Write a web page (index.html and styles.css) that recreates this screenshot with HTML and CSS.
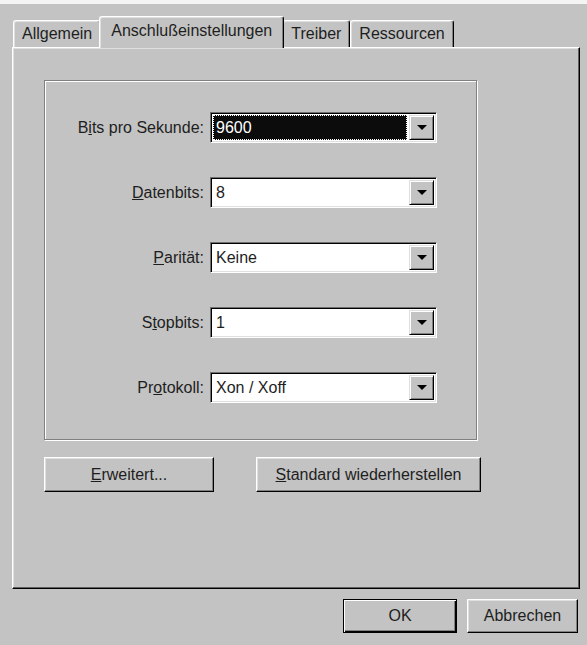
FILE: index.html
```html
<!DOCTYPE html>
<html lang="de">
<head>
<meta charset="utf-8">
<title>Eigenschaften von COM1</title>
<link rel="stylesheet" href="styles.css">
</head>
<body>
<div class="dialog">
  <div class="tabs">
    <div class="tab">Allgemein</div>
    <div class="tab tab-active">Anschlußeinstellungen</div>
    <div class="tab">Treiber</div>
    <div class="tab">Ressourcen</div>
  </div>

  <div class="panel">
    <div class="group">
      <div class="row">
        <label class="lbl">B<u>i</u>ts pro Sekunde:</label>
        <div class="combo">
          <span class="value value-selected">9600</span>
          <span class="arrow"><span class="tri"></span></span>
        </div>
      </div>
      <div class="row">
        <label class="lbl"><u>D</u>atenbits:</label>
        <div class="combo">
          <span class="value">8</span>
          <span class="arrow"><span class="tri"></span></span>
        </div>
      </div>
      <div class="row">
        <label class="lbl"><u>P</u>arität:</label>
        <div class="combo">
          <span class="value">Keine</span>
          <span class="arrow"><span class="tri"></span></span>
        </div>
      </div>
      <div class="row">
        <label class="lbl">S<u>t</u>opbits:</label>
        <div class="combo">
          <span class="value">1</span>
          <span class="arrow"><span class="tri"></span></span>
        </div>
      </div>
      <div class="row">
        <label class="lbl">Pr<u>o</u>tokoll:</label>
        <div class="combo">
          <span class="value">Xon / Xoff</span>
          <span class="arrow"><span class="tri"></span></span>
        </div>
      </div>
    </div>

    <div class="actions">
      <button class="btn btn-advanced"><u>E</u>rweitert...</button>
      <button class="btn btn-restore"><u>S</u>tandard wiederherstellen</button>
    </div>
  </div>

  <div class="footer">
    <button class="btn btn-ok btn-default">OK</button>
    <button class="btn btn-cancel">Abbrechen</button>
  </div>
</div>
</body>
</html>
```

FILE: styles.css
```css
* {
  box-sizing: border-box;
}

html,
body {
  margin: 0;
  height: 100%;
}

body {
  background: #c3c3c3;
  font-family: "Liberation Sans", Arial, sans-serif;
  font-size: 16px;
  color: #1e1e1e;
  border-top: 4px solid #f4f4f4;
}

.dialog {
  padding: 12px 7px 0 12px;
}

/* ---- tab strip ---- */
.tabs {
  display: flex;
  align-items: flex-end;
  padding-left: 1px;
}

.tab {
  height: 27px;
  padding: 0 8px;
  display: flex;
  align-items: center;
  border: 1px solid;
  border-color: #fff #000 transparent #fff;
  border-bottom: 0;
  border-radius: 3px 3px 0 0;
  box-shadow: inset -1px 0 #808080, inset 1px 1px #dfdfdf;
  background: #c3c3c3;
  white-space: nowrap;
}

.tab-active {
  position: relative;
  z-index: 1;
  height: 32px;
  margin: 0 -2px -1px;
  padding: 0 11px 4px;
}

/* ---- page area ---- */
.panel {
  width: 568px;
  height: 542px;
  padding: 32px 0 0 31px;
  border: 1px solid;
  border-color: #fff #000 #000 #fff;
  box-shadow: inset -1px -1px #606060, inset 1px 1px #dfdfdf;
}

.group {
  width: 433px;
  height: 360px;
  padding: 31px 0 0 0;
  border: 1px solid #808080;
  box-shadow: 1px 1px 0 #fff, inset 1px 1px 0 #fff;
  display: flex;
  flex-direction: column;
  gap: 34px;
}

.row {
  display: flex;
  align-items: center;
  height: 31px;
}

.lbl {
  flex: 0 0 165px;
  padding-right: 6px;
  text-align: right;
  white-space: nowrap;
}

/* ---- drop-down lists ---- */
.combo {
  width: 227px;
  height: 31px;
  display: flex;
  padding: 2px;
  background: #fff;
  border: 1px solid;
  border-color: #707070 #fff #fff #707070;
  box-shadow: inset 1px 1px #000, inset -1px -1px #dfdfdf;
}

.value {
  flex: 1;
  display: flex;
  align-items: center;
  padding-left: 3px;
  margin-right: 2px;
}

.value-selected {
  background: #0c0c0c;
  color: #fff;
  outline: 1px dotted #fff;
  outline-offset: -1px;
}

.arrow {
  flex: 0 0 25px;
  display: flex;
  align-items: center;
  justify-content: center;
  background: #c3c3c3;
  border: 1px solid;
  border-color: #dfdfdf #000 #000 #dfdfdf;
  box-shadow: inset 1px 1px #fff, inset -1px -1px #808080;
}

.tri {
  width: 0;
  height: 0;
  border-left: 5px solid transparent;
  border-right: 5px solid transparent;
  border-top: 5px solid #000;
}

/* ---- push buttons ---- */
.btn {
  font: inherit;
  color: #1e1e1e;
  background: #c3c3c3;
  height: 35px;
  padding: 0;
  border: 1px solid;
  border-color: #fff #000 #000 #fff;
  box-shadow: inset -1px -1px #808080, inset 1px 1px #dfdfdf;
  border-radius: 0;
}

.actions {
  display: flex;
  gap: 42px;
  margin-top: 17px;
}

.btn-advanced {
  width: 170px;
}

.btn-restore {
  width: 225px;
}

.footer {
  width: 568px;
  display: flex;
  justify-content: flex-end;
  gap: 10px;
  margin-top: 10px;
  padding-right: 2px;
}

.btn-ok {
  width: 114px;
  height: 34px;
}

.btn-cancel {
  width: 111px;
  height: 34px;
}

.btn-default {
  border-color: #000;
  box-shadow: inset 1px 1px #fff, inset -1px -1px #000, inset -2px -2px #808080;
}
```
